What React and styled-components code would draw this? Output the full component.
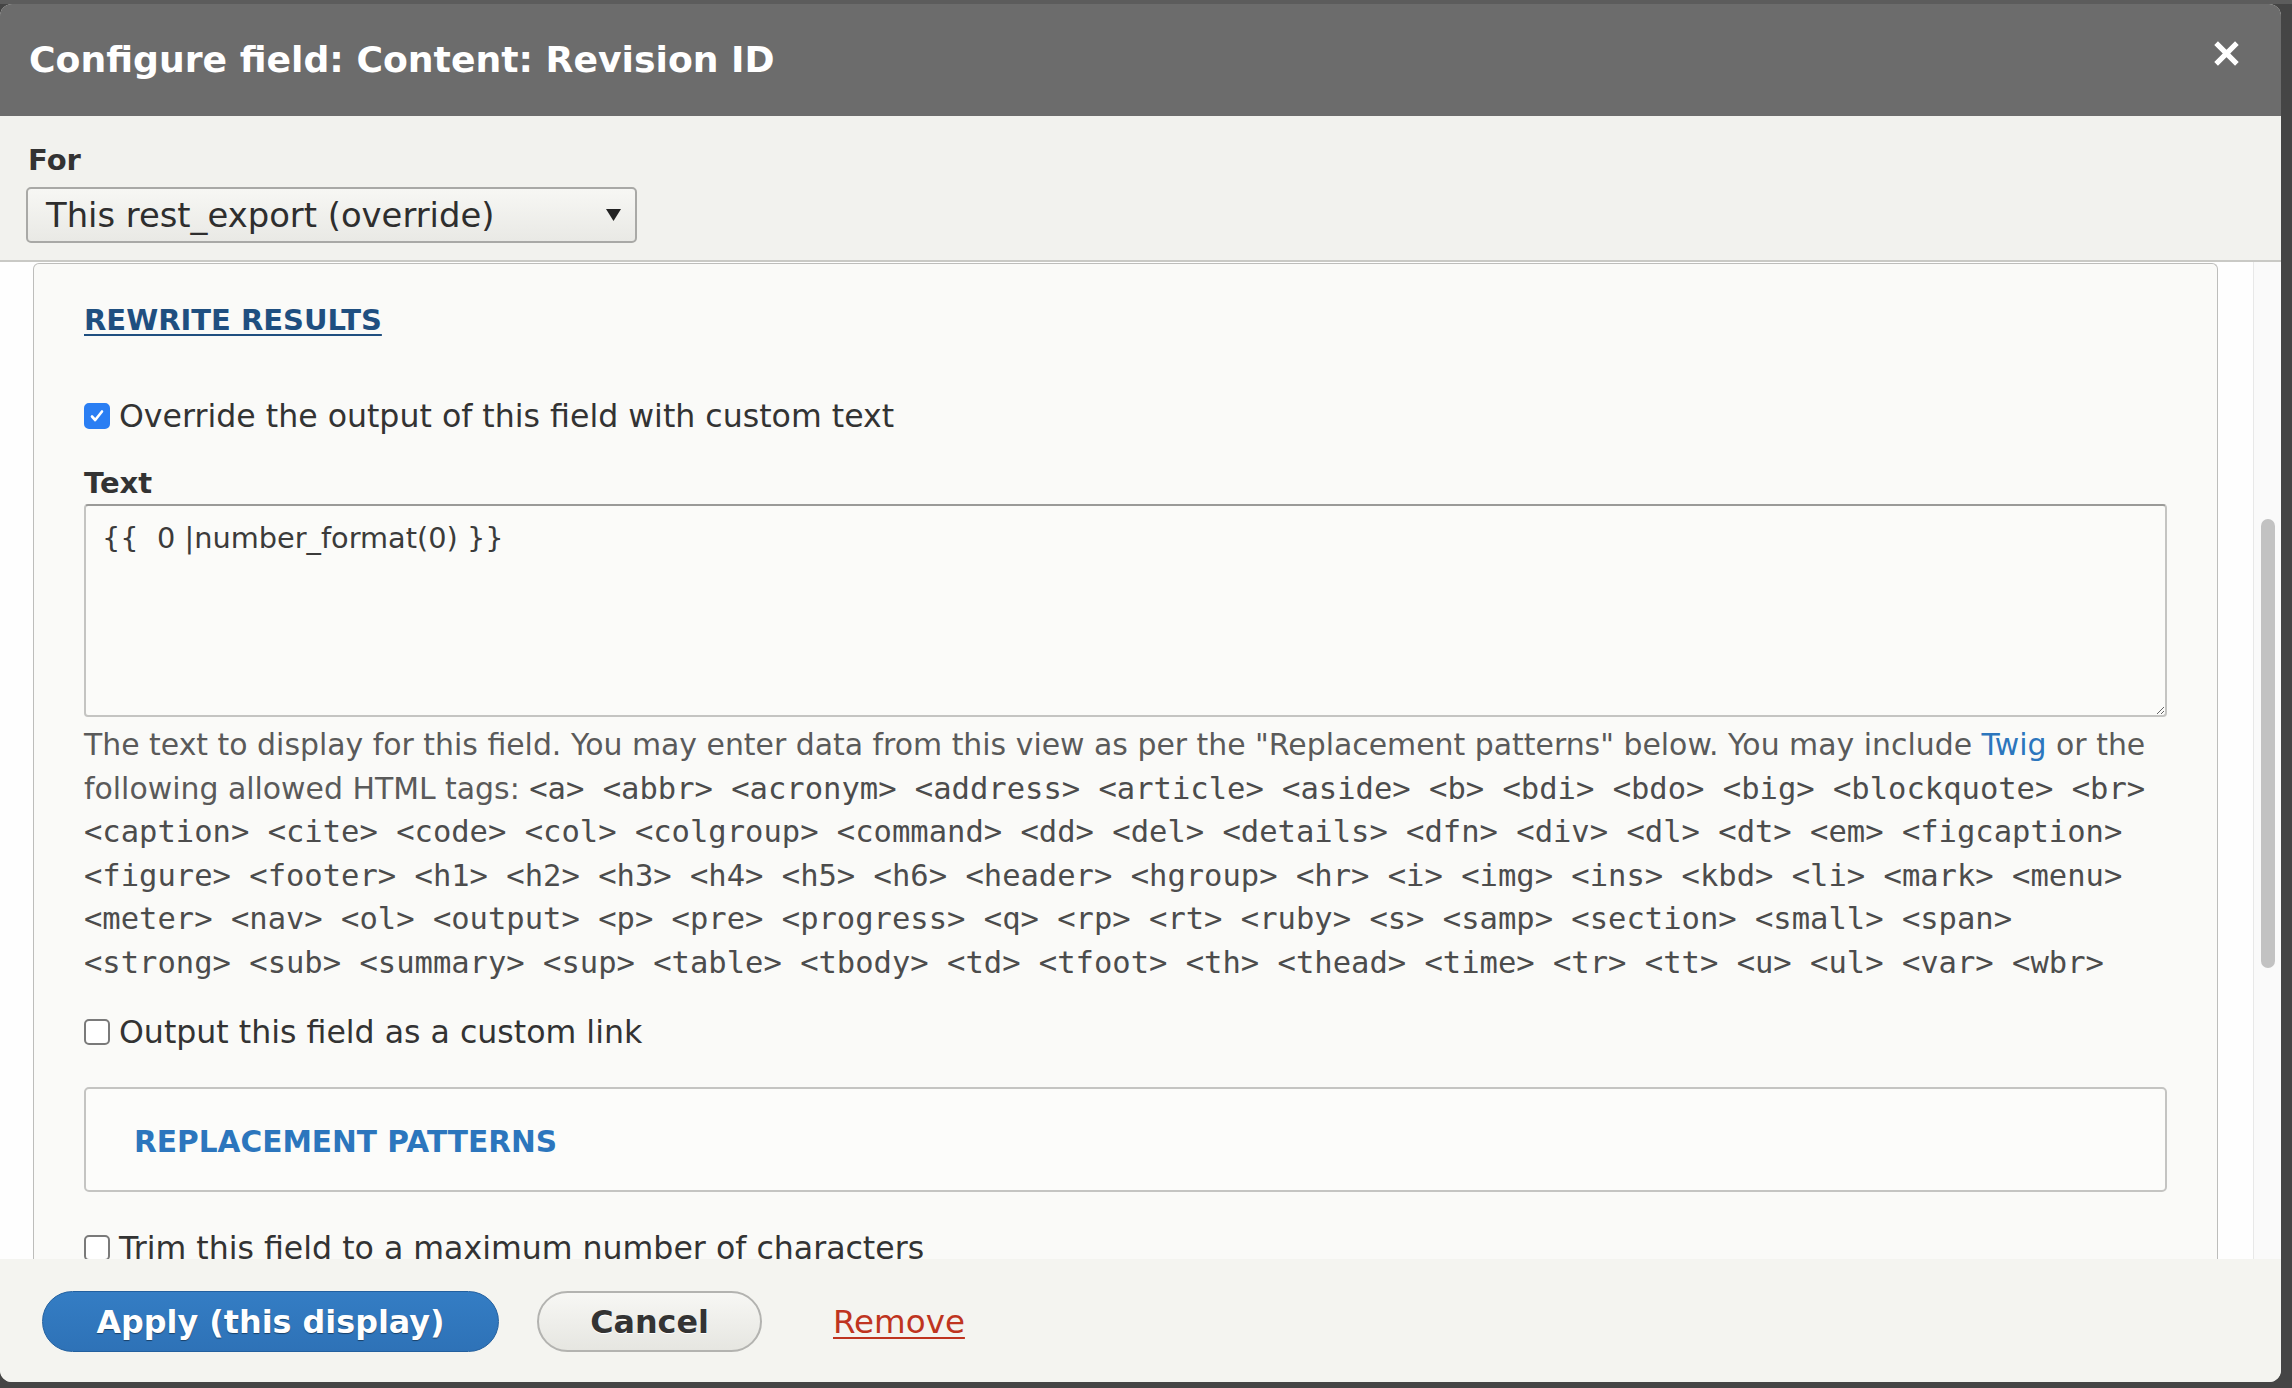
import React from "react";
import styled, { createGlobalStyle } from "styled-components";

const colors = {
  page: "#454545",
  bar: "#6c6c6c",
  body: "#f2f2ee",
  footer: "#f4f4f0",
  panel: "#fafaf8",
  text: "#333333",
  muted: "#5a5a5a",
  darkBlue: "#1f4f80",
  blue: "#2c76bd",
  red: "#bf3420",
};

const GlobalStyle = createGlobalStyle`
  html, body {
    margin: 0;
    padding: 0;
  }
  body {
    background: ${colors.page};
    font-family: "DejaVu Sans", "Liberation Sans", sans-serif;
    color: ${colors.text};
    overflow: hidden;
  }
`;

const Page = styled.div`
  width: 2292px;
  height: 1388px;
  box-sizing: border-box;
  padding: 4px 11px 6px 0;
  display: flex;
  background: linear-gradient(#5c5c5c 0 4px, ${colors.page} 4px);
`;

const Dialog = styled.div`
  flex: 1;
  display: flex;
  flex-direction: column;
  border-radius: 12px;
  overflow: hidden;
  background: ${colors.body};
`;

const TitleBar = styled.header`
  height: 112px;
  flex-shrink: 0;
  display: flex;
  align-items: center;
  justify-content: space-between;
  padding: 0 41px 0 29px;
  background: ${colors.bar};
`;

const Title = styled.h1`
  margin: 0;
  font-size: 36.2px;
  font-weight: 700;
  color: #fff;
  line-height: 1;
`;

const CloseButton = styled.button`
  width: 27px;
  height: 27px;
  padding: 0;
  border: 0;
  background: none;
  display: flex;
  margin-top: -14px;
`;

const TopSection = styled.div`
  flex-shrink: 0;
  padding: 26px 0 17px 26px;
  border-bottom: 2px solid #c9c9c5;
  background: ${colors.body};
`;

const Label = styled.div`
  font-size: 29px;
  font-weight: 700;
  line-height: 36px;
  color: ${colors.text};
  margin-left: ${(p) => p.$indent || 0}px;
  margin-top: ${(p) => p.$gap || 0}px;
`;

const SelectBox = styled.div`
  margin-top: 9px;
  width: 611px;
  height: 56px;
  box-sizing: border-box;
  display: flex;
  align-items: center;
  justify-content: space-between;
  padding: 0 14px 0 18px;
  border: 2px solid #a9a9a6;
  border-radius: 5px;
  background: linear-gradient(#f7f7f4, #e9e9e5);
  font-size: 33.8px;
  color: #2e2e2e;
`;

const ScrollArea = styled.div`
  flex: 1;
  min-height: 0;
  display: flex;
  background: #fefefe;
`;

const Viewport = styled.div`
  flex: 1;
  min-width: 0;
  overflow: hidden;
  padding: 1px 35px 0 33px;
`;

const Fieldset = styled.section`
  height: 100%;
  box-sizing: border-box;
  padding: 38px 50px 0 50px;
  border: 1px solid #bdbdbb;
  border-bottom: 0;
  border-radius: 6px 6px 0 0;
  background: ${colors.panel};
`;

const Legend = styled.a`
  display: block;
  width: max-content;
  font-size: 29px;
  font-weight: 700;
  line-height: 36px;
  color: ${colors.darkBlue};
  text-decoration: underline;
  text-underline-offset: 4px;
  text-decoration-thickness: 2px;
`;

const CheckRow = styled.label`
  display: flex;
  align-items: center;
  gap: 9px;
  margin-top: ${(p) => p.$gap}px;
  font-size: 31.6px;
  line-height: 40px;
  color: ${colors.text};
  white-space: nowrap;
`;

const Box = styled.span`
  width: 26px;
  height: 26px;
  flex-shrink: 0;
  box-sizing: border-box;
  display: flex;
  align-items: center;
  justify-content: center;
  border-radius: 5px;
  border: 2px solid ${(p) => (p.$checked ? "#2a7ef3" : "#7a7a7a")};
  background: ${(p) => (p.$checked ? "#2a7ef3" : "#fff")};
`;

const TextArea = styled.textarea`
  display: block;
  margin-top: 3px;
  width: 100%;
  height: 213px;
  box-sizing: border-box;
  padding: 15px 16px;
  border: 2px solid #c4c4c2;
  border-top-color: #9a9a98;
  border-radius: 4px;
  background: #fbfbf9;
  font-family: "DejaVu Sans", "Liberation Sans", sans-serif;
  font-size: 28.8px;
  line-height: 34px;
  color: #3b3b3b;
  resize: vertical;
  outline: none;
`;

const Description = styled.div`
  margin-top: 6px;
  font-size: 29.9px;
  line-height: 43.6px;
  color: ${colors.muted};
  white-space: nowrap;
`;

const Tags = styled.span`
  font-family: "DejaVu Sans Mono", "Liberation Mono", monospace;
  font-size: 30.5px;
  color: #4c4c4c;
`;

const TextLink = styled.a`
  color: ${colors.blue};
  text-decoration: none;
`;

const Collapsible = styled.div`
  margin-top: 35px;
  height: 105px;
  box-sizing: border-box;
  padding: 35px 48px 0;
  border: 2px solid #c4c4c2;
  border-radius: 5px;
  background: #fcfcfa;
`;

const CollapsibleTitle = styled.span`
  font-size: 29.6px;
  font-weight: 700;
  line-height: 36px;
  color: ${colors.blue};
`;

const ScrollTrack = styled.div`
  width: 28px;
  flex-shrink: 0;
  box-sizing: border-box;
  padding: 257px 0 0 7px;
  border-left: 1px solid #e8e8e8;
  background: #fafafa;
`;

const Thumb = styled.div`
  width: 14px;
  height: 449px;
  border-radius: 7px;
  background: #c2c2c2;
`;

const Footer = styled.footer`
  height: 123px;
  flex-shrink: 0;
  box-sizing: border-box;
  display: flex;
  align-items: center;
  padding: 2px 0 0 42px;
  background: ${colors.footer};
`;

const Button = styled.button`
  height: 61px;
  width: ${(p) => p.$width}px;
  margin-left: ${(p) => p.$gap || 0}px;
  border-radius: 31px;
  font-family: "DejaVu Sans", "Liberation Sans", sans-serif;
  font-size: 31.8px;
  font-weight: 700;
  cursor: pointer;
  ${(p) =>
    p.$primary
      ? `
    color: #fff;
    background: linear-gradient(#347dc4, #2e72b7);
    border: 1px solid #23609f;
    text-shadow: 0 1px 1px rgba(0, 0, 0, 0.45);
  `
      : `
    color: #333;
    background: linear-gradient(#f7f7f4, #e6e6e1);
    border: 2px solid #b3b3b0;
    text-shadow: 0 1px 0 #fff;
  `}
`;

const RemoveLink = styled.a`
  margin-left: 71px;
  font-size: 32.5px;
  color: ${colors.red};
  text-decoration: underline;
  text-underline-offset: 4px;
  text-decoration-thickness: 2px;
`;

const tagLines = [
  "<a> <abbr> <acronym> <address> <article> <aside> <b> <bdi> <bdo> <big> <blockquote> <br>",
  "<caption> <cite> <code> <col> <colgroup> <command> <dd> <del> <details> <dfn> <div> <dl> <dt> <em> <figcaption>",
  "<figure> <footer> <h1> <h2> <h3> <h4> <h5> <h6> <header> <hgroup> <hr> <i> <img> <ins> <kbd> <li> <mark> <menu>",
  "<meter> <nav> <ol> <output> <p> <pre> <progress> <q> <rp> <rt> <ruby> <s> <samp> <section> <small> <span>",
  "<strong> <sub> <summary> <sup> <table> <tbody> <td> <tfoot> <th> <thead> <time> <tr> <tt> <u> <ul> <var> <wbr>",
];

const CheckBox = ({ checked }) => (
  <Box $checked={checked}>
    {checked && (
      <svg width="16" height="16" viewBox="0 0 16 16">
        <path d="M3 8.5l3.2 3.5L13 3.5" fill="none" stroke="#fff" strokeWidth="2.6" strokeLinecap="round" strokeLinejoin="round" />
      </svg>
    )}
  </Box>
);

const App = () => {
  return (
    <>
      <GlobalStyle />
      <Page>
        <Dialog>
          <TitleBar>
            <Title>Configure field: Content: Revision ID</Title>
            <CloseButton aria-label="Close">
              <svg width="27" height="27" viewBox="0 0 26 26">
                <path d="M3 3l20 20M23 3L3 23" stroke="#fff" strokeWidth="5" />
              </svg>
            </CloseButton>
          </TitleBar>

          <TopSection>
            <Label $indent={2}>For</Label>
            <SelectBox>
              <span>This rest_export (override)</span>
              <svg width="15" height="12" viewBox="0 0 15 12">
                <path d="M0 0h15L7.5 12z" fill="#222" />
              </svg>
            </SelectBox>
          </TopSection>

          <ScrollArea>
            <Viewport>
              <Fieldset>
                <Legend>REWRITE RESULTS</Legend>

                <CheckRow $gap={58}>
                  <CheckBox checked />
                  Override the output of this field with custom text
                </CheckRow>

                <Label $gap={29}>Text</Label>
                <TextArea defaultValue="{{  0 |number_format(0) }}" />

                <Description>
                  The text to display for this field. You may enter data from this view as per the "Replacement
                  patterns" below. You may include <TextLink>Twig</TextLink> or the
                  <br />
                  following allowed HTML tags: <Tags>{tagLines[0]}</Tags>
                  {tagLines.slice(1).map((line) => (
                    <React.Fragment key={line}>
                      <br />
                      <Tags>{line}</Tags>
                    </React.Fragment>
                  ))}
                </Description>

                <CheckRow $gap={27}>
                  <CheckBox />
                  Output this field as a custom link
                </CheckRow>

                <Collapsible>
                  <CollapsibleTitle>REPLACEMENT PATTERNS</CollapsibleTitle>
                </Collapsible>

                <CheckRow $gap={36}>
                  <CheckBox />
                  Trim this field to a maximum number of characters
                </CheckRow>
              </Fieldset>
            </Viewport>
            <ScrollTrack>
              <Thumb />
            </ScrollTrack>
          </ScrollArea>

          <Footer>
            <Button $primary $width={457}>Apply (this display)</Button>
            <Button $width={225} $gap={38}>Cancel</Button>
            <RemoveLink>Remove</RemoveLink>
          </Footer>
        </Dialog>
      </Page>
    </>
  );
};

export default App;
